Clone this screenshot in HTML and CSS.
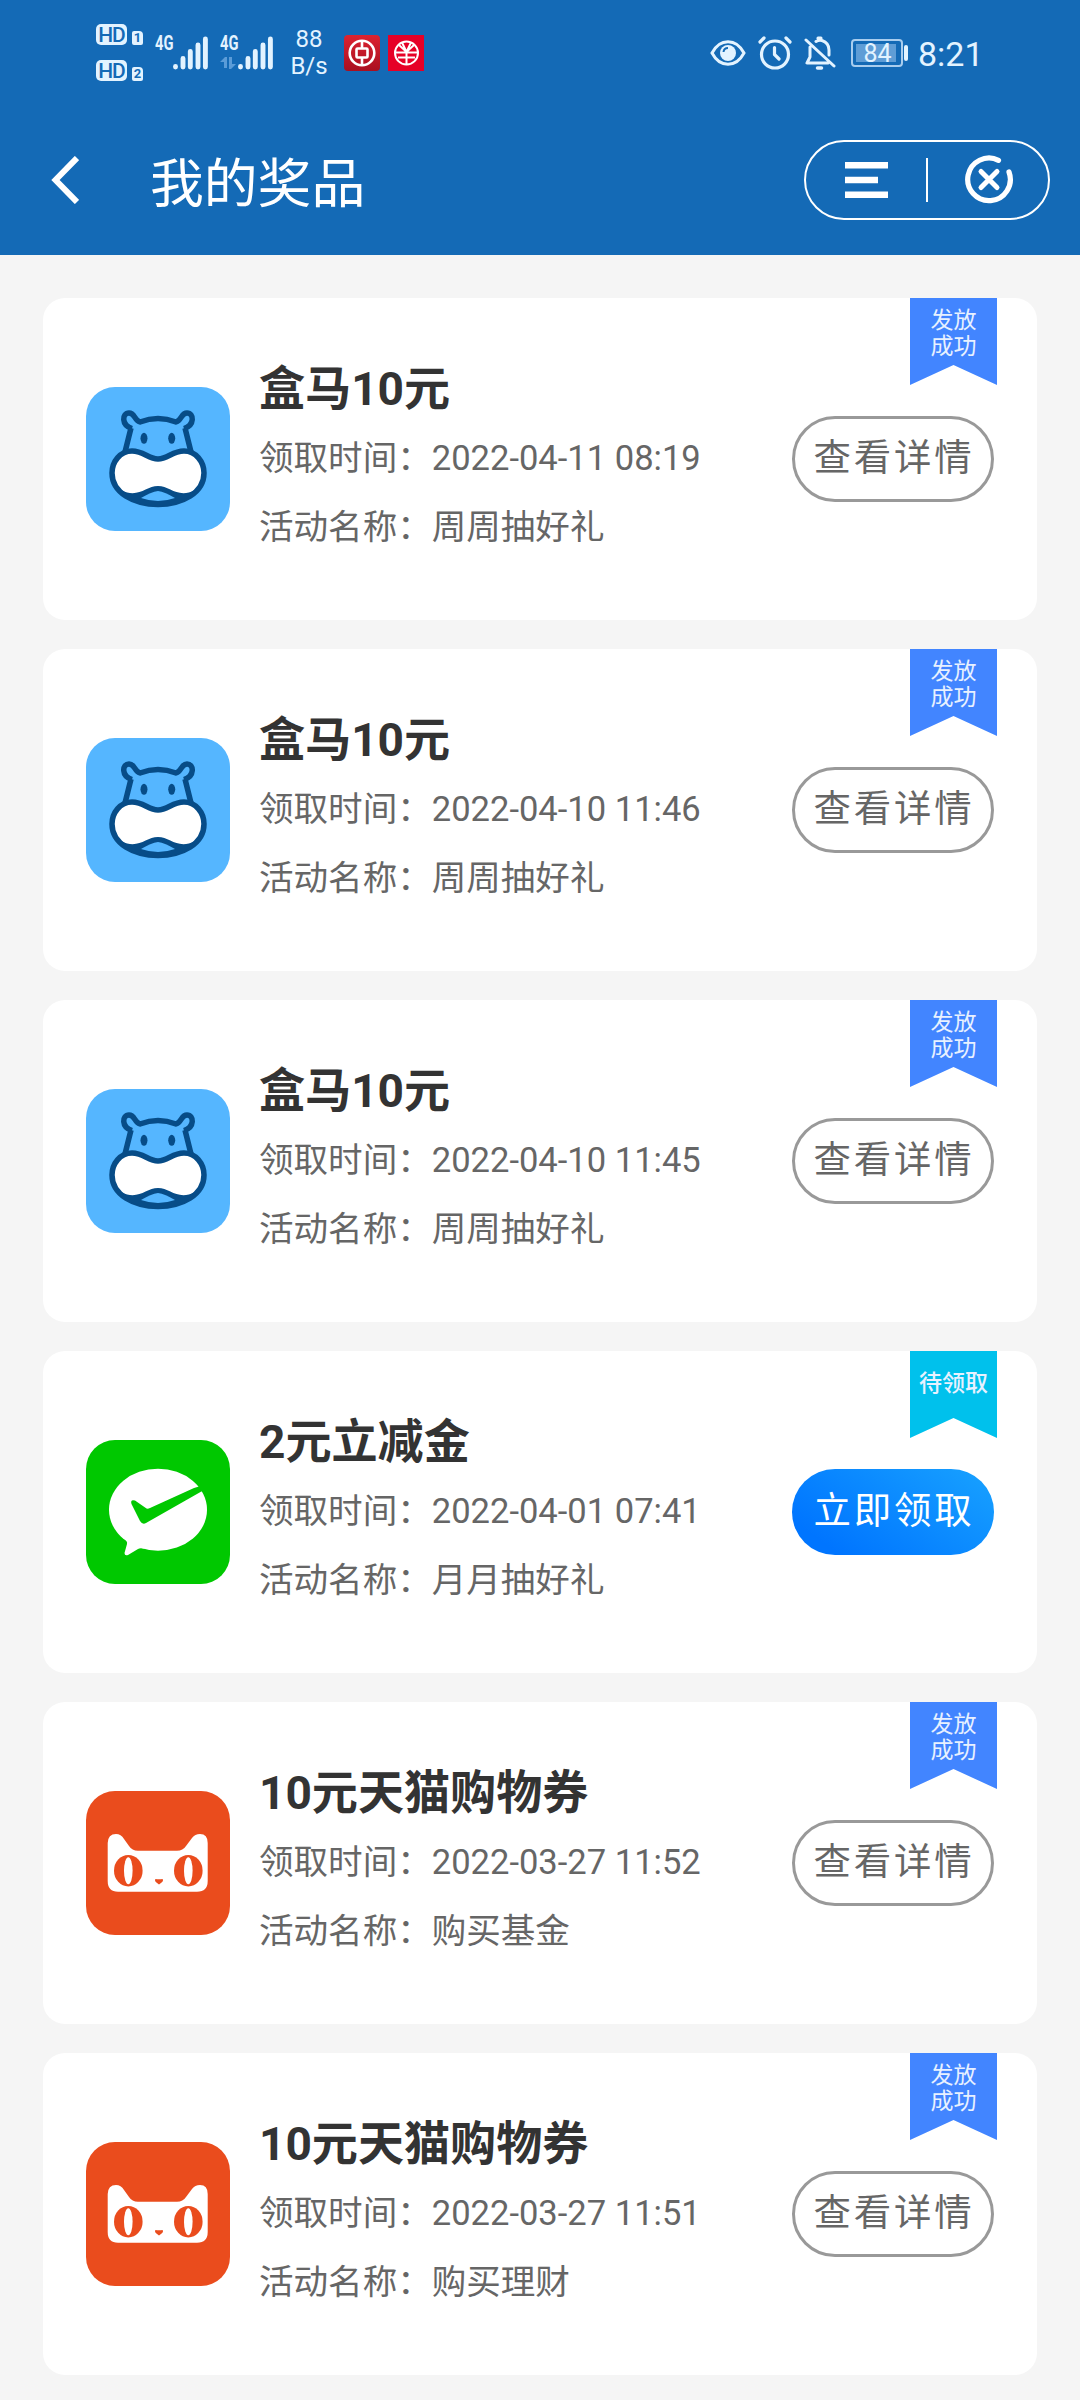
FILE: index.html
```html
<!DOCTYPE html>
<html lang="zh-CN">
<head>
<meta charset="utf-8">
<title>我的奖品</title>
<link rel="stylesheet" href="styles.css">
</head>
<body>
<svg class="defs" aria-hidden="true">
  <symbol id="hippo" viewBox="0 0 144 144">
    <rect width="144" height="144" rx="29" fill="#55b6ff"/>
    <g fill="none" stroke="#074c87" stroke-width="5.500" stroke-linejoin="round">
      <path d="M39 65 45 41M105 65 99 41"/>
      <path d="M46 41.500C35 38 36 26 43 26C49 26 48 33 54 35Q72 28 90 35C96 33 95 26 101 26C108 26 109 38 98 41.500"/>
      <path d="M72 72C62 72 58 64 46 64C34 64 26 75 26 86C26 106 48 117.500 72 117.500C96 117.500 118 106 118 86C118 75 110 64 98 64C86 64 82 72 72 72Z" fill="#fff"/>
    </g>
    <path d="M35 103C52 112 60 99 72 99C84 99 92 112 109 103C102 114 88 119 72 119C56 119 42 114 35 103Z" fill="#074c87"/>
    <path d="M55 111Q65 105 72 104Q79 105 89 111Q72 117 55 111Z" fill="#55b6ff"/>
    <ellipse cx="58" cy="51.300" rx="3.500" ry="5.500" fill="#074c87"/>
    <ellipse cx="85.700" cy="51.300" rx="3.500" ry="5.500" fill="#074c87"/>
  </symbol>
  <symbol id="wepay" viewBox="0 0 144 144">
    <rect width="144" height="144" rx="29" fill="#00c800"/>
    <ellipse cx="72" cy="69.700" rx="49" ry="41" fill="#fff"/>
    <path d="M36 97Q42 101 41 104L38.500 113Q38.500 116 42 115L52 109Q54 107.500 60 109Z" fill="#fff"/>
    <path d="M49 60.500 60.500 68.500Q62 69 64 68L108 48Q113 46 118 46L118 50L60 83Q56.500 85 54 81L45.500 64Q44 59 49 60.500Z" fill="#00c800"/>
  </symbol>
  <symbol id="tmall" viewBox="0 0 144 144">
    <rect width="144" height="144" rx="29" fill="#ea4c1d"/>
    <path d="M21.700 52Q22 43 30 43Q35 43 38 48L43 55Q46 59.700 52 59.700H91Q97 59.700 100 55L106 47Q109 43 114 43Q121.700 43 121.700 52V90Q121.700 100.700 111 100.700H32Q21.700 100.700 21.700 90Z" fill="#fff"/>
    <g fill="#ea4c1d"><ellipse cx="42.300" cy="79.700" rx="14.300" ry="15.700"/><ellipse cx="102.300" cy="79.700" rx="14.300" ry="15.700"/>
    <path d="M69.500 88Q73 88.500 76.500 88Q78.500 90 73 93.500Q67.500 90 69.500 88Z"/></g>
    <ellipse cx="42.300" cy="79.700" rx="4.300" ry="13.500" fill="#fff"/><ellipse cx="102.300" cy="79.700" rx="4.300" ry="13.500" fill="#fff"/>
  </symbol>
  <symbol id="bars" viewBox="0 0 36 34">
    <path d="M2.500 30.500V31M10 22.500V31M17.300 15.500V31M25 9V31M32.400 3V31" stroke="#e3f3ff" stroke-width="4.900" stroke-linecap="round"/>
  </symbol>
</svg>

<header class="top">
  <div class="status">
    <div class="hd-group">
      <div class="hd-row"><span class="hd">HD</span><span class="sim">1</span></div>
      <div class="hd-row"><span class="hd">HD</span><span class="sim">2</span></div>
    </div>
    <div class="signal">
      <span class="net"><b>4G</b></span><svg width="36" height="34"><use href="#bars"/></svg>
    </div>
    <div class="signal">
      <span class="net"><b>4G</b><svg width="16" height="12" viewBox="0 0 16 12"><path d="M0 5 5 0H7V11H4V5ZM9 0H12V7H16L11 12H9Z" fill="#5b9cd8"/></svg></span><svg width="36" height="34"><use href="#bars"/></svg>
    </div>
    <div class="speed"><span>88</span><span>B/s</span></div>
    <svg width="36" height="36" viewBox="0 0 36 36">
      <defs><linearGradient id="red" x2="0" y2="1"><stop stop-color="#dc2330"/><stop offset="1" stop-color="#a90f20"/></linearGradient></defs>
      <rect width="36" height="36" rx="4" fill="url(#red)"/>
      <g fill="none" stroke="#fff" stroke-width="2.600"><circle cx="18" cy="18" r="12.300"/><rect x="12.500" y="13.500" width="11" height="9" rx="1"/><path d="M18 6V13.500M18 22.500V30"/></g>
    </svg>
    <svg class="app-cmb" width="36" height="36" viewBox="0 0 36 36">
      <rect width="36" height="36" fill="#e60027"/>
      <g fill="none" stroke="#fff" stroke-width="2"><circle cx="18.500" cy="18" r="11.500"/><path d="M11 10 18.500 17 26 10M7 17.500H30M10 22.500H27M18.500 17V29.500M18.500 17 14 7.500M18.500 17 23 7.500"/></g>
    </svg>
    <div class="status-right">
      <svg width="36" height="28" viewBox="0 0 36 28"><path d="M2 14C10-1 26-1 34 14C26 29 10 29 2 14Z" fill="none" stroke="#e3f3ff" stroke-width="3"/><circle cx="18" cy="14" r="8" fill="#e3f3ff"/><path d="M13.500 13A4.500 4.500 0 0 1 18 9" fill="none" stroke="#146ab6" stroke-width="2"/></svg>
      <svg width="34" height="34" viewBox="0 0 34 34" fill="none" stroke="#e3f3ff" stroke-width="3.200" stroke-linecap="round"><circle cx="17" cy="18.500" r="13.500"/><path d="M2 6 6 2M28 2 32 6M16.500 11.500V18.500L21 23"/></svg>
      <svg width="32" height="34" viewBox="0 0 32 34" fill="none" stroke="#e3f3ff" stroke-width="3" stroke-linecap="round" stroke-linejoin="round"><path d="M2 4 30 30M6 11V21L3 27H24M12 5.500Q15 3.500 18 4.500Q25 7 25 14V19M14 3V2H17V4"/><path d="M13.500 32H17.500" stroke-width="3.500"/></svg>
      <div class="battery"><span>84</span></div>
      <time>8:21</time>
    </div>
  </div>
  <nav class="nav">
    <svg width="28" height="48" viewBox="0 0 28 48"><path d="M26 2 4.500 24 26 46" fill="none" stroke="#fff" stroke-width="6"/></svg>
    <h1>我的奖品</h1>
    <div class="capsule">
      <svg width="44" height="38" viewBox="0 0 44 38"><path d="M1 4.300H44M1 19H34M1 33.700H44" stroke="#fff" stroke-width="6.600"/></svg>
      <i></i>
      <svg width="50" height="50" viewBox="0 0 50 50" fill="none" stroke="#fff" stroke-linecap="round"><path d="M34.500 5.300A21.300 21.300 0 1 0 45 17" stroke-width="5.200"/><path d="M17 16.500 33 32.500M33 16.500 17 32.500" stroke-width="5" /></svg>
    </div>
  </nav>
</header>

<main class="list">
  <article class="card">
    <svg class="logo"><use href="#hippo"/></svg>
    <div class="info"><h2>盒马10元</h2><p>领取时间：2022-04-11 08:19</p><p>活动名称：周周抽好礼</p></div>
    <button class="btn">查看详情</button>
    <div class="ribbon">发放<br>成功</div>
  </article>
  <article class="card">
    <svg class="logo"><use href="#hippo"/></svg>
    <div class="info"><h2>盒马10元</h2><p>领取时间：2022-04-10 11:46</p><p>活动名称：周周抽好礼</p></div>
    <button class="btn">查看详情</button>
    <div class="ribbon">发放<br>成功</div>
  </article>
  <article class="card">
    <svg class="logo"><use href="#hippo"/></svg>
    <div class="info"><h2>盒马10元</h2><p>领取时间：2022-04-10 11:45</p><p>活动名称：周周抽好礼</p></div>
    <button class="btn">查看详情</button>
    <div class="ribbon">发放<br>成功</div>
  </article>
  <article class="card">
    <svg class="logo"><use href="#wepay"/></svg>
    <div class="info"><h2>2元立减金</h2><p>领取时间：2022-04-01 07:41</p><p>活动名称：月月抽好礼</p></div>
    <button class="btn primary">立即领取</button>
    <div class="ribbon pending">待领取</div>
  </article>
  <article class="card">
    <svg class="logo"><use href="#tmall"/></svg>
    <div class="info"><h2>10元天猫购物券</h2><p>领取时间：2022-03-27 11:52</p><p>活动名称：购买基金</p></div>
    <button class="btn">查看详情</button>
    <div class="ribbon">发放<br>成功</div>
  </article>
  <article class="card">
    <svg class="logo"><use href="#tmall"/></svg>
    <div class="info"><h2>10元天猫购物券</h2><p>领取时间：2022-03-27 11:51</p><p>活动名称：购买理财</p></div>
    <button class="btn">查看详情</button>
    <div class="ribbon">发放<br>成功</div>
  </article>
</main>
</body>
</html>
```
FILE: styles.css
```css
* { box-sizing: border-box; }
body {
  margin: 0;
  width: 1080px;
  min-height: 2400px;
  background: #f5f5f5;
  font-family: Roboto, "Noto Sans CJK SC", sans-serif;
}
h1, h2, p { margin: 0; }
svg { display: block; flex: none; }
.defs { width: 0; height: 0; position: absolute; }

.top { height: 255px; background: #146ab6; color: #fff; }

/* status bar */
.status { display: flex; align-items: center; height: 105px; padding-left: 96px; color: #e3f3ff; }
.hd-group { display: flex; flex-direction: column; gap: 15px; width: 59px; }
.hd-row { display: flex; align-items: flex-end; gap: 5px; height: 21px; }
.hd {
  width: 31px; height: 21px; border-radius: 5px; background: #e3f3ff; color: #146ab6;
  font-size: 21px; line-height: 22px; font-weight: 500; text-align: center; letter-spacing: -1px;
}
.sim {
  width: 11px; height: 14px; background: #e3f3ff; color: #146ab6; border-radius: 2px 4px 2px 2px;
  font-size: 13px; line-height: 14px; font-weight: 700; text-align: center;
}
.signal { display: flex; height: 34px; width: 65px; }
.net { display: flex; flex-direction: column; gap: 6px; width: 18px; }
.net b { font-size: 21px; line-height: 15px; font-weight: 700; width: 27px; transform: scaleX(.7); transform-origin: 0 50%; }
.speed { display: flex; flex-direction: column; width: 44px; margin-left: 2px; margin-right: 13px; text-align: center; font-size: 24px; line-height: 27px; }
.app-cmb { margin-left: 8px; }
.status-right { display: flex; align-items: center; margin-left: 286px; }
.status-right svg + svg { margin-left: 12px; }
.battery {
  position: relative; margin-left: 15px; width: 52px; height: 28px; padding: 3px;
  border: 2px solid #a9cdee; border-radius: 4px;
}
.battery span {
  display: block; height: 18px; width: 40px; padding-left: 3px; background: #5f9dd6;
  font-size: 25px; line-height: 20px; text-align: center;
}
.battery::after { content: ""; position: absolute; left: 51px; top: 4px; width: 4px; height: 16px; border-radius: 2px; background: #e3f3ff; }
.status-right time { margin-left: 15px; padding-top: 2px; font-size: 34px; line-height: 40px; }

/* title bar */
.nav { display: flex; align-items: center; height: 150px; padding: 0 30px 0 51px; }
.nav h1 { margin-left: 71px; padding-top: 9px; font-size: 53.800px; line-height: 80px; font-weight: 400; }
.capsule {
  display: flex; align-items: center; margin-left: auto; width: 246px; height: 80px;
  padding-left: 38px; border: 2px solid #fff; border-radius: 40px;
}
.capsule i { width: 2px; height: 44px; margin: 0 36px 0 38px; background: #fff; }

/* prize list */
.list { display: flex; flex-direction: column; gap: 29px; padding: 43px 43px 0; }
.card { position: relative; display: flex; align-items: flex-start; height: 322px; background: #fff; border-radius: 22px; padding: 0 43px; }
.logo { width: 144px; height: 144px; margin-top: 89px; }
.info { flex: 1; margin-left: 29px; padding-top: 56px; white-space: nowrap; }
.info h2 { font-size: 46.080px; line-height: 70px; font-weight: 700; color: #333; }
.info p { font-size: 34.560px; line-height: 69px; color: #666; }
.btn {
  width: 202px; height: 86px; margin-top: 118px; padding: 0 0 2px 2px; border: 3px solid #999; border-radius: 43px;
  background: #fff; color: #666; font-family: inherit; font-size: 37.440px; letter-spacing: 2.880px; line-height: 78px; white-space: nowrap;
}
.btn.primary { border: 0; padding-bottom: 2px; color: #fff; background: linear-gradient(35deg, #0075ff 15%, #18a2ff); }
.ribbon {
  position: absolute; right: 40px; top: 0; width: 87px; height: 87px; padding-top: 10px;
  background: #4285ff; color: #e8f1ff; font-size: 23px; line-height: 26px; text-align: center;
  clip-path: polygon(0 0, 100% 0, 100% 100%, 50% 77%, 0 100%);
}
.ribbon.pending { padding-top: 20px; background: #00c1ec; font-weight: 500; }
```
